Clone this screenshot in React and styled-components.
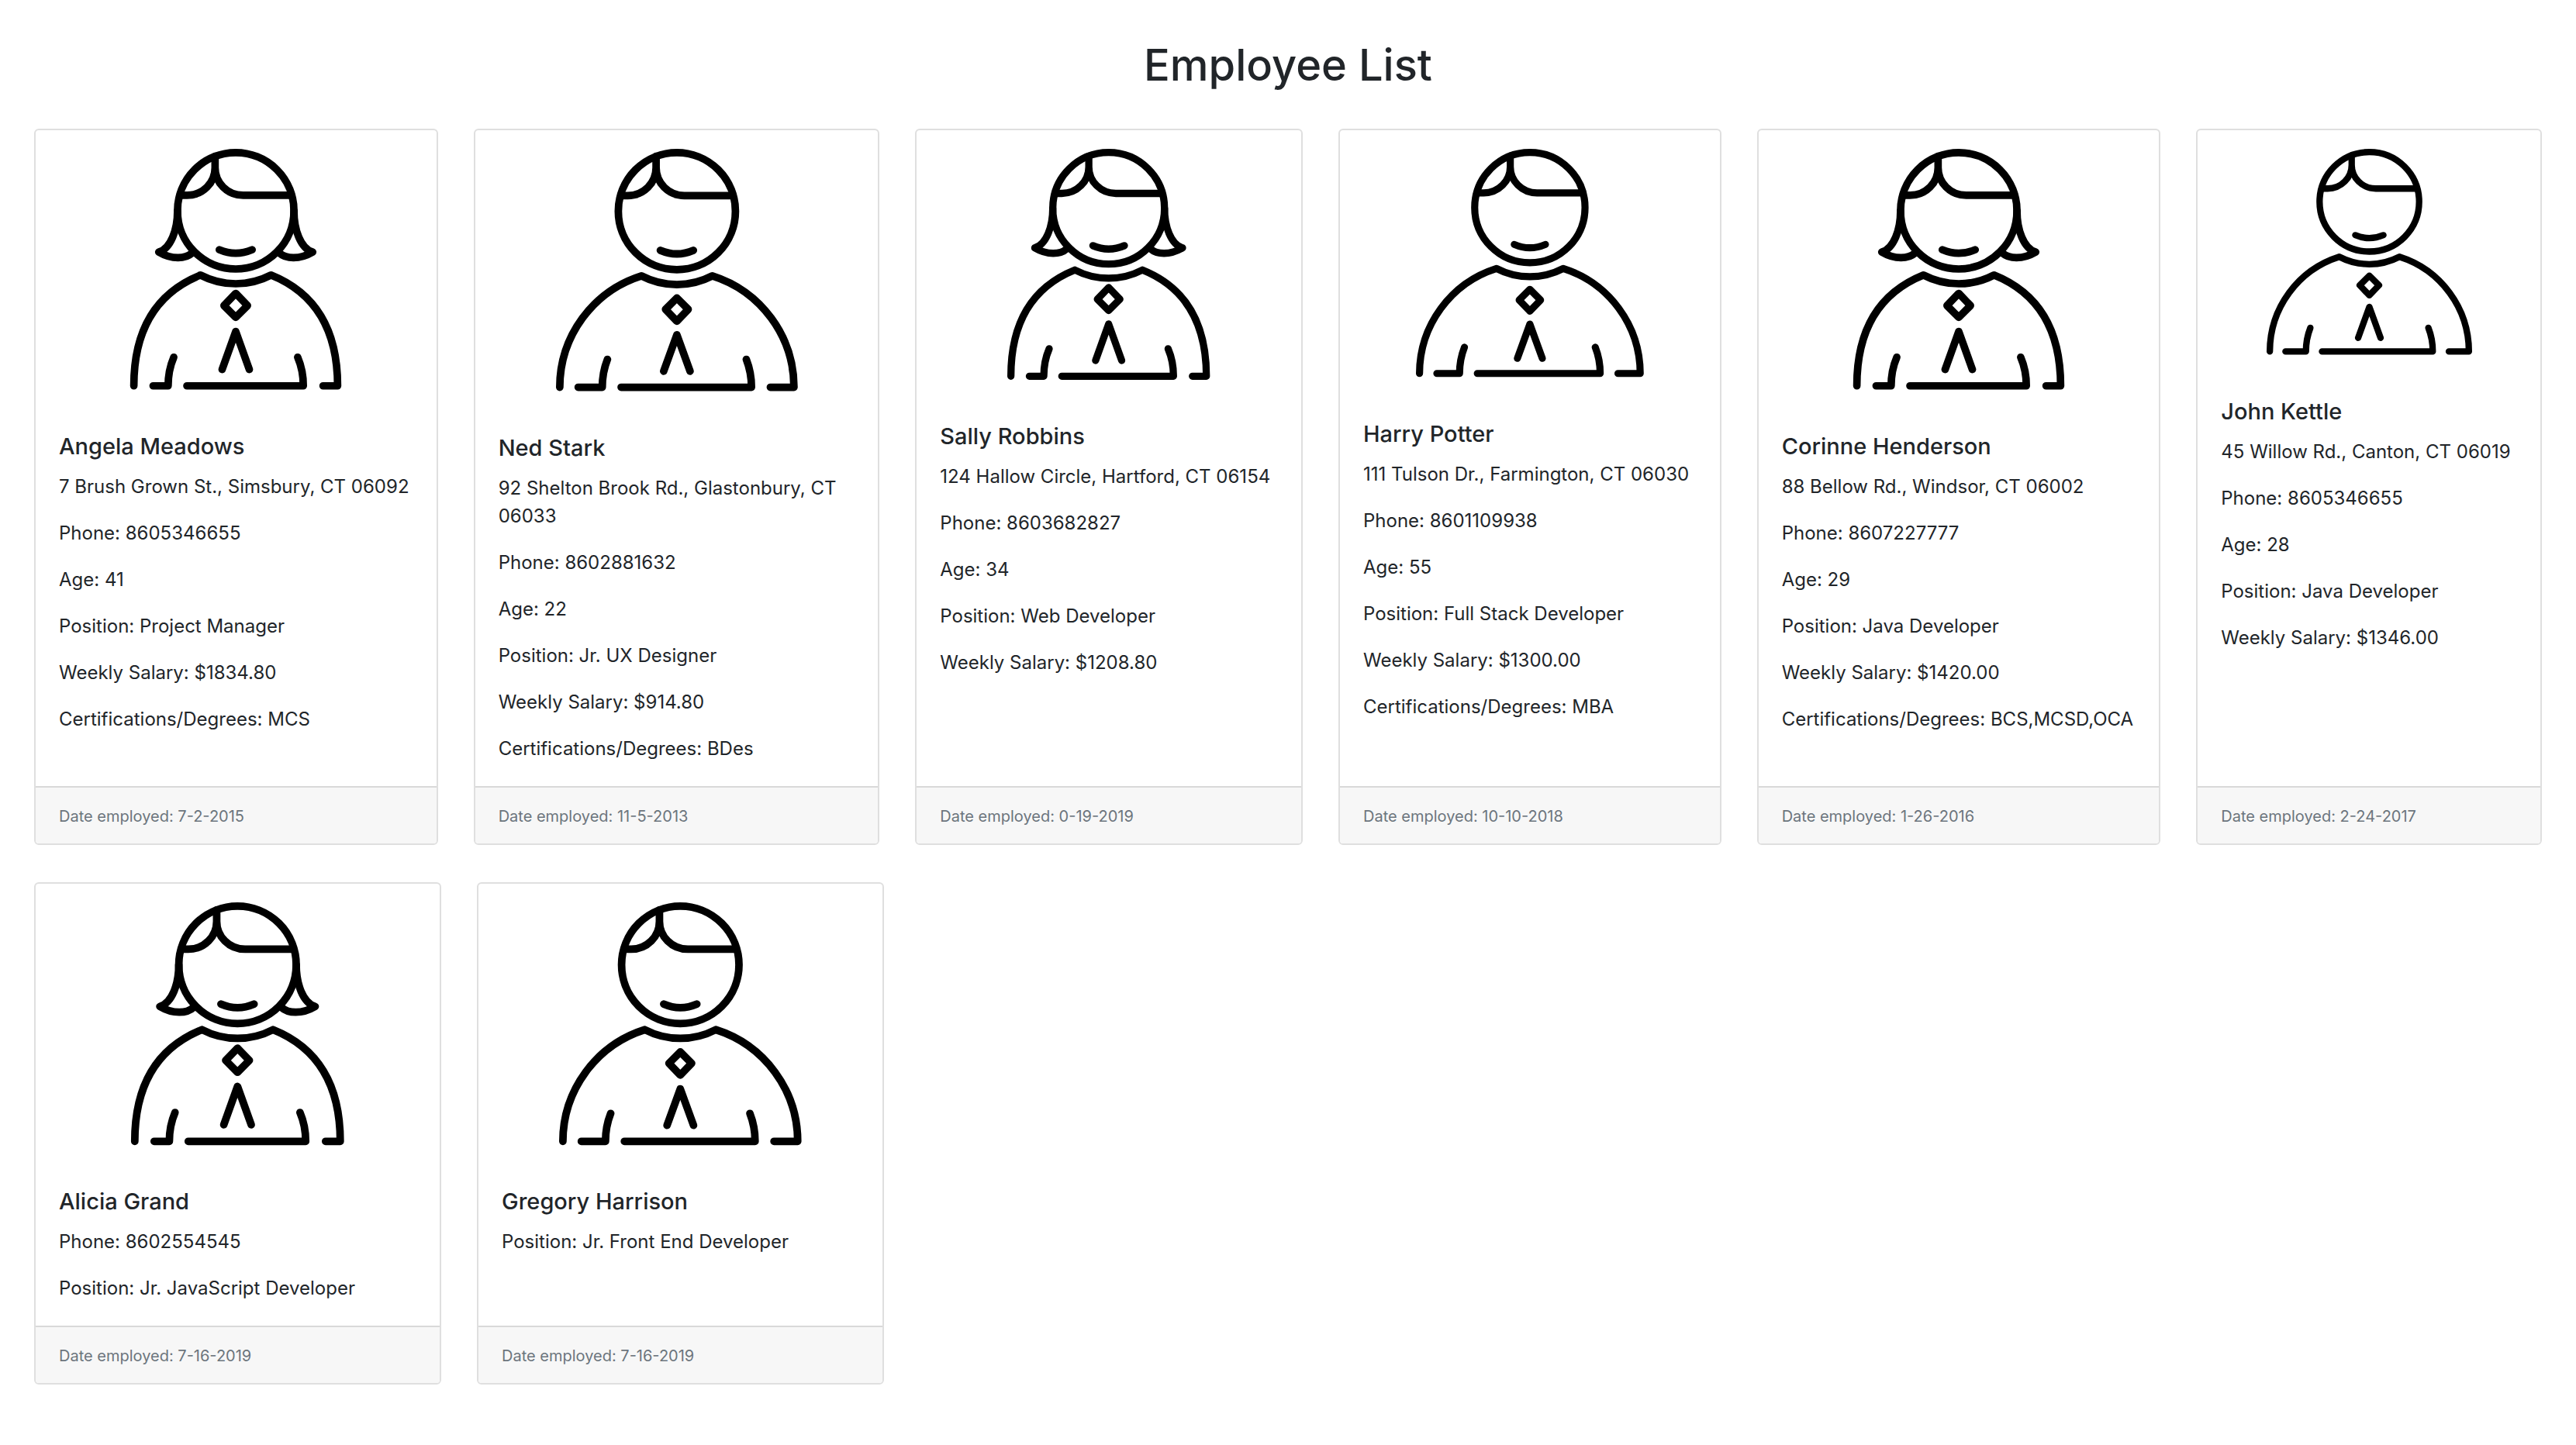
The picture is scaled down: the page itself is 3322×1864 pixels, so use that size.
import React from "react";
import styled, { createGlobalStyle } from "styled-components";

const GlobalStyle = createGlobalStyle`
  *, *::before, *::after { box-sizing: border-box; }
  body {
    margin: 0;
    background: #fff;
    color: #212529;
    font-family: Inter, "Liberation Sans", sans-serif;
    font-size: 24px;
    line-height: 36px;
  }
`;

const Page = styled.main`
  padding: 48px 44px 78px;
`;

const Heading = styled.h1`
  margin: 0 0 46px;
  font-size: 56px;
  line-height: 72px;
  font-weight: 500;
  text-align: center;
`;

const Deck = styled.div`
  display: grid;
  grid-template-columns: ${(p) => p.$columns};
  column-gap: 46px;
  & + & {
    margin-top: 48px;
  }
`;

const Card = styled.article`
  display: flex;
  flex-direction: column;
  min-width: 0;
  border: 2px solid #dfdfdf;
  border-radius: 6px;
  overflow: hidden;
`;

const Portrait = styled.svg`
  display: block;
  width: 60%;
  margin: 24px auto;
  overflow: visible;
  fill: none;
  stroke: #000;
  stroke-width: 16;
  stroke-linecap: round;
  stroke-linejoin: round;
`;

const Body = styled.div`
  flex: 1;
  padding: 32px 30px 30px;
`;

const Name = styled.h2`
  margin: 0 0 16px;
  font-size: 29px;
  line-height: 36px;
  font-weight: 500;
`;

const Line = styled.p`
  margin: 0;
  & + & {
    margin-top: 24px;
  }
`;

const Footer = styled.footer`
  padding: 19px 30px 17px;
  border-top: 2px solid #d9d9d9;
  background: #f7f7f7;
  color: #6c757d;
  font-size: 20px;
`;

function Woman() {
  const lock = "M132 132C132 172 118 212 92 220Q112 232 133 232Q152 232 163 222";
  return (
    <Portrait viewBox="0 0 512 512" role="img" aria-label="Portrait of a woman">
      <circle cx="256" cy="132" r="124" />
      <path d={lock} />
      <path d={lock} transform="translate(512 0) scale(-1 1)" />
      <path d="M212 16V40C212 72 238 99 272 99H373M212 40C212 72 186 99 152 99H141" />
      <path d="M221 215Q256 230 291 215" />
      <path d="M39 505C39 390 84 308 181 269A162 162 0 0 0 331 269C428 308 473 390 473 505H442" />
      <path d="M256 308L281 334L256 359L231 334Z" />
      <path d="M227 470L256 389L285 470" />
      <path d="M80 505H112Q112 472 124 444" />
      <path d="M152 505H400Q400 472 388 444" />
    </Portrait>
  );
}

function Man() {
  return (
    <Portrait viewBox="0 0 512 512" role="img" aria-label="Portrait of a man">
      <circle cx="256" cy="132" r="124" />
      <path d="M212 16V40C212 72 238 99 272 99H373M212 40C212 72 186 99 152 99H141" />
      <path d="M221 215Q256 230 291 215" />
      <path d="M8 505A248 248 0 0 1 181 269A162 162 0 0 0 331 269A248 248 0 0 1 504 505H454" />
      <path d="M256 316L280 340L256 365L232 340Z" />
      <path d="M228 471L256 394L284 471" />
      <path d="M47 505H98Q98 474 109 446" />
      <path d="M138 505H414Q414 474 403 446" />
    </Portrait>
  );
}

const staff = [
  {
    name: "Angela Meadows",
    woman: true,
    lines: ["7 Brush Grown St., Simsbury, CT 06092", "Phone: 8605346655", "Age: 41", "Position: Project Manager", "Weekly Salary: $1834.80", "Certifications/Degrees: MCS"],
    date: "7-2-2015",
  },
  {
    name: "Ned Stark",
    lines: ["92 Shelton Brook Rd., Glastonbury, CT 06033", "Phone: 8602881632", "Age: 22", "Position: Jr. UX Designer", "Weekly Salary: $914.80", "Certifications/Degrees: BDes"],
    date: "11-5-2013",
  },
  {
    name: "Sally Robbins",
    woman: true,
    lines: ["124 Hallow Circle, Hartford, CT 06154", "Phone: 8603682827", "Age: 34", "Position: Web Developer", "Weekly Salary: $1208.80"],
    date: "0-19-2019",
  },
  {
    name: "Harry Potter",
    lines: ["111 Tulson Dr., Farmington, CT 06030", "Phone: 8601109938", "Age: 55", "Position: Full Stack Developer", "Weekly Salary: $1300.00", "Certifications/Degrees: MBA"],
    date: "10-10-2018",
  },
  {
    name: "Corinne Henderson",
    woman: true,
    lines: ["88 Bellow Rd., Windsor, CT 06002", "Phone: 8607227777", "Age: 29", "Position: Java Developer", "Weekly Salary: $1420.00", "Certifications/Degrees: BCS,MCSD,OCA"],
    date: "1-26-2016",
  },
  {
    name: "John Kettle",
    lines: ["45 Willow Rd., Canton, CT 06019", "Phone: 8605346655", "Age: 28", "Position: Java Developer", "Weekly Salary: $1346.00"],
    date: "2-24-2017",
  },
];

const recruits = [
  {
    name: "Alicia Grand",
    woman: true,
    lines: ["Phone: 8602554545", "Position: Jr. JavaScript Developer"],
    date: "7-16-2019",
  },
  {
    name: "Gregory Harrison",
    lines: ["Position: Jr. Front End Developer"],
    date: "7-16-2019",
  },
];

function EmployeeCard({ person }) {
  return (
    <Card>
      {person.woman ? <Woman /> : <Man />}
      <Body>
        <Name>{person.name}</Name>
        {person.lines.map((line) => (
          <Line key={line}>{line}</Line>
        ))}
      </Body>
      <Footer>Date employed: {person.date}</Footer>
    </Card>
  );
}

export default function App() {
  return (
    <>
      <GlobalStyle />
      <Page>
        <Heading>Employee List</Heading>
        <Deck $columns="521fr 524fr 500fr 494fr 521fr 446fr">
          {staff.map((person) => (
            <EmployeeCard key={person.name} person={person} />
          ))}
        </Deck>
        <Deck $columns="525fr 525fr 2092fr">
          {recruits.map((person) => (
            <EmployeeCard key={person.name} person={person} />
          ))}
        </Deck>
      </Page>
    </>
  );
}
